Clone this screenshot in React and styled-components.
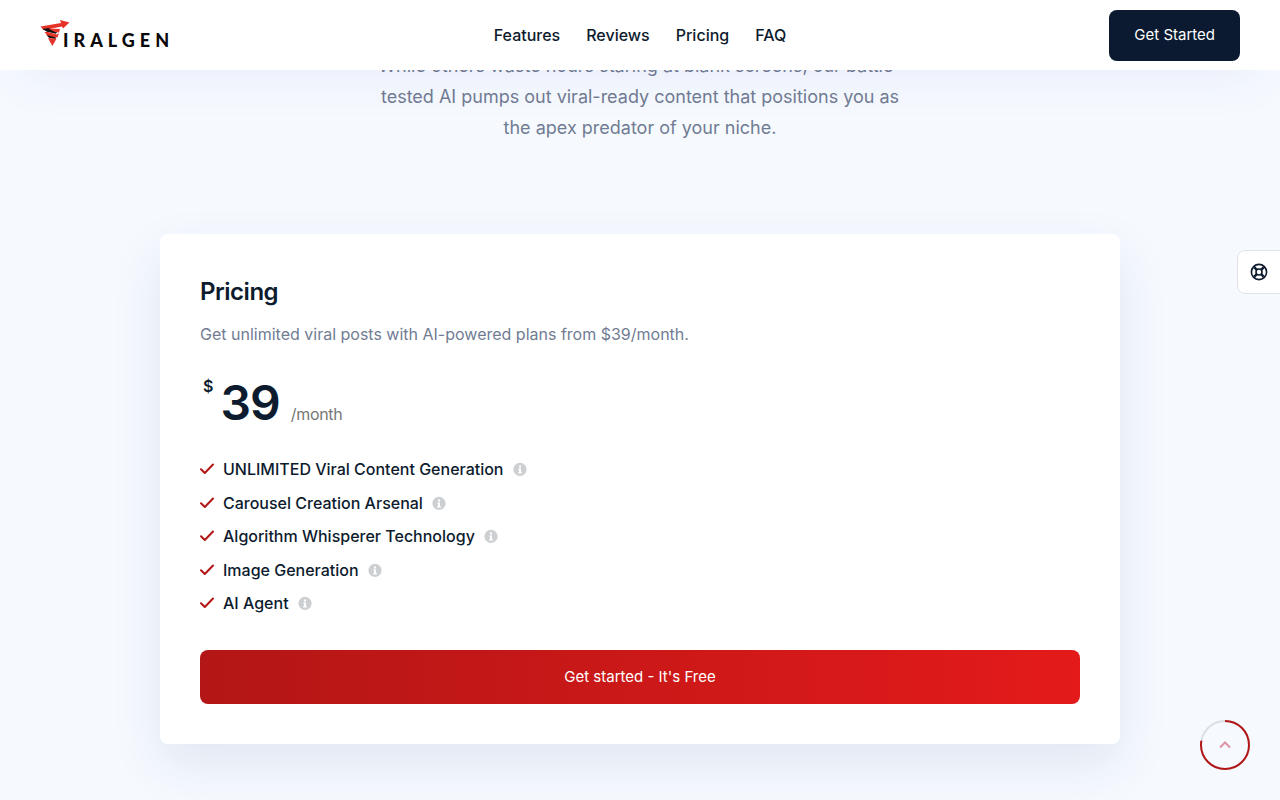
import React from "react";
import styled, { createGlobalStyle } from "styled-components";

const Global = createGlobalStyle`
  * { box-sizing: border-box; }
  body { margin: 0; background: #f6faff; color: #0d1b2e; font: 400 16px/24px Inter, sans-serif; }
  h2, p, ul { margin: 0; padding: 0; }
  a { color: inherit; text-decoration: none; }
  button { font: inherit; cursor: pointer; }
`;
const Header = styled.header`
  position: sticky; top: 0; z-index: 10; height: 70px; padding: 0 40px;
  display: grid; grid-template-columns: 1fr auto 1fr; align-items: center;
  background: #fff; box-shadow: 0 24px 48px -20px rgba(80, 70, 170, 0.1);
`;
const Logo = styled.a`
  display: flex; align-items: center; justify-self: start; color: #0a0a0a;
  svg { width: 30px; height: 28px; margin: -2px -7px 0 0; }
`;
const LogoText = styled.span`
  font: 900 18px/20px Lato, sans-serif; letter-spacing: 5px; padding-top: 9px;
`;
const Nav = styled.nav`display: flex; gap: 26px; font-weight: 500;`;
const HeaderButton = styled.button`
  justify-self: end; height: 51px; padding: 0 25px; border: 0; border-radius: 8px;
  background: #0b1a30; color: #fff; font-size: 15px;
`;
const Main = styled.main`padding: 0 24px 56px;`;
const Lead = styled.p`
  max-width: 540px; margin: -20px auto 91px; text-align: center;
  font-size: 18px; line-height: 31px; color: #717c93;
`;
const Card = styled.section`
  max-width: 960px; margin: 0 auto; padding: 40px; border-radius: 8px; background: #fff;
  box-shadow: 0 20px 50px rgba(40, 60, 120, 0.1);
`;
const Title = styled.h2`font-size: 24px; line-height: 36px; font-weight: 600; letter-spacing: -0.02em;`;
const Description = styled.p`margin-top: 12px; color: #717c93;`;
const Price = styled.div`display: flex; align-items: flex-start; margin-top: 28px; padding-left: 3px;`;
const Currency = styled.span`font-weight: 600; line-height: 24px; margin-right: 7px;`;
const Amount = styled.span`font-size: 48px; line-height: 58px; font-weight: 600; letter-spacing: -0.02em;`;
const Period = styled.span`
  align-self: flex-end; margin-left: 11px; padding-bottom: 6px;
  color: #777; line-height: 24px; letter-spacing: -0.02em;
`;
const Features = styled.ul`
  list-style: none; min-height: 158px; margin-top: 25px;
  display: flex; flex-direction: column; justify-content: space-between;
`;
const Feature = styled.li`
  display: flex; align-items: center; font-weight: 500;
  svg { width: 14px; height: 14px; flex: none; }
`;
const FeatureName = styled.span`margin: 0 9px;`;
const Cta = styled.button`
  display: block; width: 100%; height: 54px; margin-top: 35px; border: 0; border-radius: 8px;
  background: linear-gradient(90deg, #b31616, #e41a1a); color: #fff; font-size: 15px;
`;
const HelpButton = styled.button`
  position: fixed; z-index: 5; right: -1px; top: 250px; width: 44px; height: 44px; padding: 0 0 0 12px;
  display: flex; align-items: center; border: 1px solid #dfe2eb; border-radius: 8px 0 0 8px;
  background: #fff; color: #0d1b2e;
`;
const TopButton = styled.button`
  position: fixed; z-index: 5; right: 30px; bottom: 30px; width: 50px; height: 50px;
  padding: 0; border: 0; background: none; border-radius: 50%;
  svg { display: block; }
`;

const features = [
  "UNLIMITED Viral Content Generation",
  "Carousel Creation Arsenal",
  "Algorithm Whisperer Technology",
  "Image Generation",
  "AI Agent",
];

const LogoMark = () => (
  <svg viewBox="0 0 30 28" aria-hidden="true">
    <path d="M0.5 6.5L21 3L20 0L29.5 2.5L23 8.5L22 6.5L3.5 10Z" fill="#e63329" />
    <path d="M2.5 9L9 8L17 12L16 13.8L7 11.8Z" fill="#111" />
    <path d="M8 8.5L20 9L19 12.5L15 12Z" fill="#e63329" />
    <path d="M4.5 12L8 12L17 14.5L19 13L17.5 17.5L8 16.5Z" fill="#e63329" />
    <path d="M6.5 15L16 17.5L15.5 19L9 17.8Z" fill="#111" />
    <path d="M8 18L16.5 18.8L12.3 26Z" fill="#e63329" />
  </svg>
);
const Check = () => (
  <svg viewBox="0 0 14 14" fill="none" stroke="#b31616" strokeWidth="2" strokeLinecap="round" strokeLinejoin="round" aria-hidden="true">
    <path d="M1 7.2L4.8 11L13 2.5" />
  </svg>
);
const Info = () => (
  <svg viewBox="0 0 14 14" aria-hidden="true">
    <circle cx="7" cy="7.4" r="6.6" fill="#cdd0d2" />
    <path d="M6 3.4h2v2H6zM5.3 6.4H8V10h.8v1.4H5.2V10H6V7.7h-.7z" fill="#fff" />
  </svg>
);
const Lifebuoy = () => (
  <svg width="18" height="18" viewBox="0 0 18 18" fill="none" stroke="currentColor" strokeWidth="1.6" aria-hidden="true">
    <circle cx="9" cy="9" r="7.6" />
    <circle cx="9" cy="9" r="3" />
    <path d="M3.2 4.2L6.5 7.2M4.2 3.2L7.2 6.5M14.8 4.2L11.5 7.2M13.8 3.2L10.8 6.5M3.2 13.8L6.5 10.8M4.2 14.8L7.2 11.5M14.8 13.8L11.5 10.8M13.8 14.8L10.8 11.5" strokeWidth="1.2" />
  </svg>
);

export default function App() {
  return (
    <>
      <Global />
      <Header>
        <Logo href="#" aria-label="Viralgen">
          <LogoMark />
          <LogoText>IRALGEN</LogoText>
        </Logo>
        <Nav>
          <a href="#features">Features</a>
          <a href="#reviews">Reviews</a>
          <a href="#pricing">Pricing</a>
          <a href="#faq">FAQ</a>
        </Nav>
        <HeaderButton>Get Started</HeaderButton>
      </Header>
      <Main>
        <Lead>
          While others waste hours staring at blank screens, our battle-tested AI pumps out
          viral-ready content that positions you as the apex predator of your niche.
        </Lead>
        <Card id="pricing">
          <Title>Pricing</Title>
          <Description>Get unlimited viral posts with AI-powered plans from $39/month.</Description>
          <Price>
            <Currency>$</Currency>
            <Amount>39</Amount>
            <Period>/month</Period>
          </Price>
          <Features>
            {features.map((name) => (
              <Feature key={name}>
                <Check />
                <FeatureName>{name}</FeatureName>
                <Info />
              </Feature>
            ))}
          </Features>
          <Cta>Get started - It's Free</Cta>
        </Card>
      </Main>
      <HelpButton aria-label="Help"><Lifebuoy /></HelpButton>
      <TopButton aria-label="Back to top">
        <svg width="50" height="50" viewBox="0 0 50 50" fill="none" strokeWidth="2">
          <circle cx="25" cy="25" r="24" stroke="#dcdfe6" />
          <circle cx="25" cy="25" r="24" stroke="#b31616" pathLength="100" strokeDasharray="78 100" transform="rotate(-90 25 25)" />
          <path d="M20 27.5L25 22.5L30 27.5" stroke="#dc93a5" />
        </svg>
      </TopButton>
    </>
  );
}
